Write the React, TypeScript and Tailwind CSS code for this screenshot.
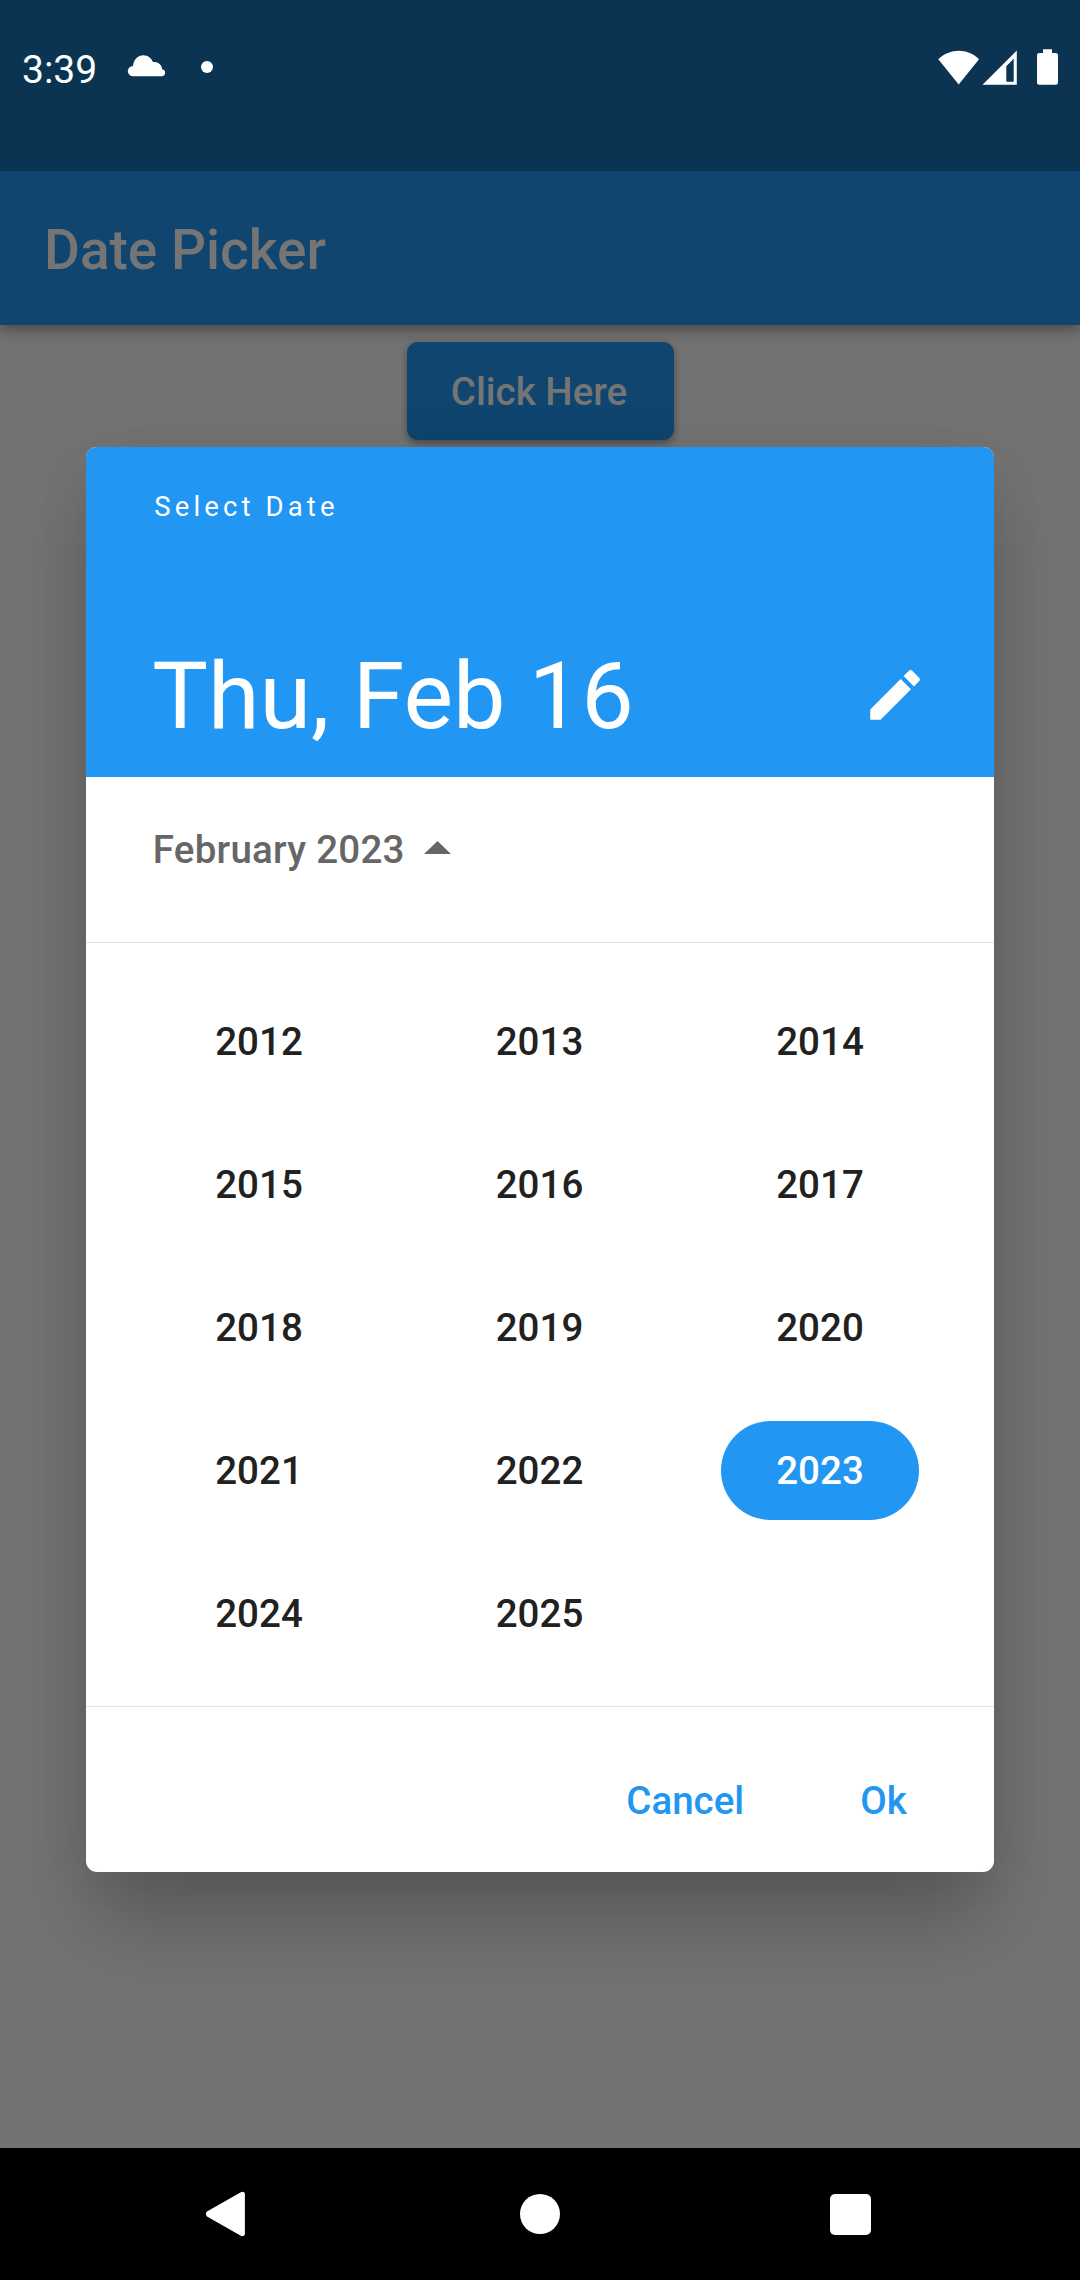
const YEARS = [2012, 2013, 2014, 2015, 2016, 2017, 2018, 2019, 2020, 2021, 2022, 2023, 2024, 2025];
const SELECTED_YEAR = 2023;

function StatusBar() {
  return (
    <header className="relative z-10 flex h-[171px] shrink-0 items-start bg-[#0b3453] pt-[44px] pr-[22px] pl-[22px] text-white">
      <span className="mt-px w-[105px] text-[39px] leading-[50px]">3:39</span>
      <svg className="mt-[10px] h-[24px] w-[39px]" viewBox="0 0 39 24" fill="currentColor">
        <path d="M6 22.300A5.200 5.200 0 0 1 6 11.900C6.600 5.600 10.800 1.200 16.300 1.200C20.800 1.200 24.500 4 26 8.100C31 7.400 34.600 10.600 35.200 15.200A3.600 3.600 0 0 1 35 22.300Z" />
      </svg>
      <span className="mt-[17px] ml-[35px] size-3 rounded-full bg-white" />
      <div className="mt-[4px] ml-auto flex items-start">
        <svg className="h-[38px] w-[42px]" viewBox="0 0 42 38" fill="currentColor">
          <path d="M0.300 11.300C11.800 -0.200 30 -0.200 41 11.300L20.700 36.500Z" />
        </svg>
        <svg className="ml-[2px] h-[38px] w-[36px]" viewBox="0 0 36 38" fill="currentColor">
          <path fillRule="evenodd" d="M34.800 2.500V36.700H0.500ZM31.700 10.700L24.300 18.200V33.700H31.700Z" />
        </svg>
        <svg className="ml-[19px] h-[38px] w-[21px]" viewBox="0 0 21 38" fill="currentColor">
          <path d="M6 5V1.200H15V5H18.800Q21 5 21 7.200V34.500Q21 36.700 18.800 36.700H2.200Q0 36.700 0 34.500V7.200Q0 5 2.200 5Z" />
        </svg>
      </div>
    </header>
  );
}

function NavigationBar() {
  return (
    <nav className="flex h-[132px] shrink-0 items-center justify-between bg-black pr-[209px] pl-[206px] text-white">
      <svg className="h-[46px] w-[40px]" viewBox="0 0 40 46" fill="currentColor">
        <path d="M1 20.600L34.800 1.200Q38.600 -0.300 38.900 3.200V42.800Q38.600 46.300 34.800 44.800L1 25.400Q-1.200 23 1 20.600Z" />
      </svg>
      <span className="ml-[4px] size-[40px] rounded-full bg-white" />
      <span className="mt-[1px] size-[41px] rounded-[5px] bg-white" />
    </nav>
  );
}

function DatePickerDialog() {
  return (
    <section
      role="dialog"
      className="flex h-[1424.500px] w-[907.500px] flex-col overflow-hidden rounded-[11px] bg-white shadow-[0_56px_84px_-8px_rgba(0,0,0,0.24),0_0_60px_0_rgba(0,0,0,0.05)]"
    >
      <div className="flex h-[330px] shrink-0 flex-col justify-between bg-[#2196f3] pr-[66px] pl-[66px] text-white">
        <p className="mt-[43px] pl-[2px] text-[27.500px] leading-[33px] tracking-[4.125px]">Select Date</p>
        <div className="mb-[27px] flex items-center justify-between">
          <h2 className="-mb-px pt-px text-[93.500px] leading-[110px]">Thu, Feb 16</h2>
          <button aria-label="Edit date" className="size-[66px]">
            <svg viewBox="0 0 24 24" fill="currentColor">
              <path d="M3 17.250V21h3.750L17.810 9.940l-3.750-3.750L3 17.250zM20.710 7.040a.996.996 0 0 0 0-1.410l-2.340-2.340a.996.996 0 0 0-1.410 0l-1.830 1.830 3.750 3.750 1.830-1.830z" />
            </svg>
          </button>
        </div>
      </div>
      <div className="flex h-[166px] shrink-0 items-start border-b border-[#e4e4e4] pt-[48px] pl-[66.500px] text-[#666666]">
        <span className="text-[38.500px] leading-[50px] font-medium tracking-[0.250px]">February 2023</span>
        <svg className="mt-[16px] ml-[19.500px] h-[13px] w-[27px]" viewBox="0 0 27 13" fill="currentColor">
          <path d="M0 13L13.500 0L27 13Z" />
        </svg>
      </div>
      <div className="grid h-[764px] shrink-0 grid-cols-[repeat(3,198px)] content-start justify-center gap-x-[82.500px] gap-y-[44px] border-b border-[#e4e4e4] pt-[49px] pr-px">
        {YEARS.map((year) => (
          <button
            key={year}
            className={
              year === SELECTED_YEAR
                ? "h-[99px] rounded-full bg-[#2196f3] text-[38.500px] font-medium text-white"
                : "h-[99px] rounded-full text-[38.500px] font-medium text-[#212121]"
            }
          >
            {year}
          </button>
        ))}
      </div>
      <div className="flex grow items-center justify-end gap-[116px] pt-[24px] pr-[87px] text-[38.500px] font-medium text-[#2196f3]">
        <button>Cancel</button>
        <button>Ok</button>
      </div>
    </section>
  );
}

export default function App() {
  return (
    <div className="relative flex h-[2280px] w-[1080px] flex-col overflow-hidden bg-[#737373] font-['Roboto',sans-serif]">
      <StatusBar />
      <div className="flex h-[154px] shrink-0 items-center bg-[#0f456f] pt-[4px] pl-[44px] shadow-[0_5px_10px_rgba(0,0,0,0.25),0_2px_28px_rgba(0,0,0,0.16)]">
        <h1 className="text-[55px] leading-[64px] font-medium text-[#757575]">Date Picker</h1>
      </div>
      <main className="flex grow flex-col items-center pt-[16.500px]">
        <button className="h-[98.500px] w-[267px] rounded-[11px] bg-[#0f456f] pt-[2px] pr-[2px] text-[38.500px] font-medium text-[#757575] shadow-[0_4px_6px_rgba(0,0,0,0.25),0_1px_8px_rgba(0,0,0,0.15)]">
          Click Here
        </button>
      </main>
      <NavigationBar />
      <div className="absolute inset-x-0 top-[447px] flex justify-center">
        <DatePickerDialog />
      </div>
    </div>
  );
}
